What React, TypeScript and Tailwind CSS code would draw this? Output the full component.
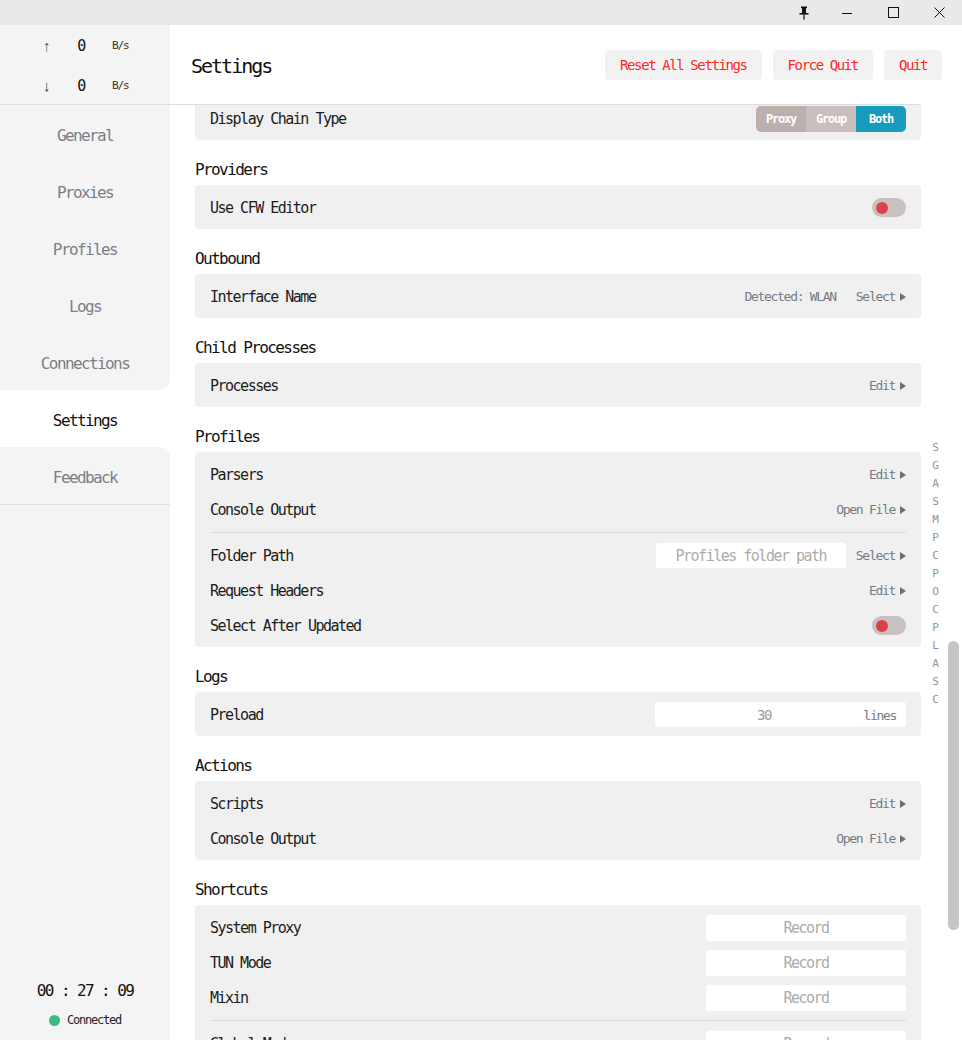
import React from 'react';

const navItems = ['General', 'Proxies', 'Profiles', 'Logs', 'Connections', 'Settings', 'Feedback'];
const indexLetters = ['S', 'G', 'A', 'S', 'M', 'P', 'C', 'P', 'O', 'C', 'P', 'L', 'A', 'S', 'C'];

function Arrow() {
  return (
    <svg width="6" height="8" viewBox="0 0 6 8" className="ml-[5px]">
      <polygon points="0,0 6,4 0,8" fill="#6f6f6f" />
    </svg>
  );
}

function Action({ text }: { text: string }) {
  return (
    <span className="flex items-center text-[13px] text-[#767b84]">
      {text}
      <Arrow />
    </span>
  );
}

function Toggle() {
  return (
    <div className="w-[34px] h-[19px] rounded-full bg-[#c9c0c0] flex items-center pl-[4px]">
      <span className="w-[12px] h-[12px] rounded-full bg-[#d8434a]" />
    </div>
  );
}

function RecordBox() {
  return (
    <div className="w-[200px] h-[26px] bg-white rounded-[3px] flex items-center justify-center pt-[2px] text-[15px] text-[#ababab]">
      Record
    </div>
  );
}

function Row({ label, children }: { label: string; children?: React.ReactNode }) {
  return (
    <div className="h-[35px] flex items-center justify-between px-[15px]">
      <span className="text-[15px] text-[#1c1c1c] pt-[2px]">{label}</span>
      <div className="flex items-center">{children}</div>
    </div>
  );
}

function Card({ children, className = '' }: { children: React.ReactNode; className?: string }) {
  return <div className={`w-[726px] bg-[#f0f0f0] rounded-[4px] pt-[5px] pb-[4px] ${className}`}>{children}</div>;
}

function Divider() {
  return <div className="mx-[15px] my-[5px] h-px bg-[#dadada]" />;
}

function Section({ title, children }: { title: string; children: React.ReactNode }) {
  return (
    <div className="mt-[17px]">
      <div className="h-6 leading-6 mb-1 pt-[1px] text-[16px] text-[#111]">{title}</div>
      {children}
    </div>
  );
}

function TitleBar() {
  return (
    <div className="h-[25px] bg-[#e9e9e9] flex justify-end items-center shrink-0">
      <div className="w-[40px] flex justify-center">
        <svg width="12" height="14" viewBox="0 0 12 14">
          <rect x="3" y="0.5" width="6" height="1.6" fill="#111" />
          <rect x="4" y="2" width="4" height="5" fill="#111" />
          <polygon points="1.5,7 10.5,7 10.5,8.6 1.5,8.6" fill="#111" />
          <rect x="5.4" y="8.6" width="1.2" height="5" fill="#111" />
        </svg>
      </div>
      <div className="w-[46px] flex justify-center">
        <svg width="10" height="10" viewBox="0 0 10 10">
          <line x1="0" y1="5.5" x2="10" y2="5.5" stroke="#111" strokeWidth="1" />
        </svg>
      </div>
      <div className="w-[46px] flex justify-center">
        <svg width="11" height="11" viewBox="0 0 11 11">
          <rect x="0.5" y="0.5" width="10" height="10" fill="none" stroke="#111" strokeWidth="1" />
        </svg>
      </div>
      <div className="w-[46px] flex justify-center">
        <svg width="11" height="11" viewBox="0 0 11 11">
          <path d="M0.5 0.5 L10.5 10.5 M10.5 0.5 L0.5 10.5" stroke="#111" strokeWidth="1" />
        </svg>
      </div>
    </div>
  );
}

function Sidebar() {
  const selected = 5;
  return (
    <div className="w-[170px] shrink-0 flex flex-col bg-white">
      {/* traffic */}
      <div className="h-[80px] bg-[#f4f4f4] border-b border-[#dedede] flex flex-col">
        {[
          { arrow: '↑', color: 'text-[#2a5c9b]' },
          { arrow: '↓', color: 'text-[#24406a]' },
        ].map((t, i) => (
          <div key={i} className={`${i === 0 ? 'h-[40px]' : 'h-[39px]'} flex items-center pl-[40px] pt-[3px]`}>
            <span className={`w-[12px] text-center text-[15px] font-['Liberation_Sans',sans-serif] ${t.color}`}>
              {t.arrow}
            </span>
            <span className="w-[58px] text-center text-[15px] text-[#111]">0</span>
            <span className="ml-[2px] text-[11px] text-[#3b3024]">B/s</span>
          </div>
        ))}
      </div>
      {/* nav */}
      <div className="flex flex-col">
        {navItems.map((item, i) => (
          <div
            key={item}
            className={`h-[57px] flex items-center justify-center pt-[5px] text-[16px] ${
              i === selected
                ? 'bg-white text-[#111]'
                : `bg-[#f4f4f4] text-[#7b7f88] ${i === selected - 1 ? 'rounded-br-[10px]' : ''} ${
                    i === selected + 1 ? 'rounded-tr-[10px] border-b border-[#dedede] h-[58px]' : ''
                  }`
            }`}
          >
            {item}
          </div>
        ))}
      </div>
      <div className="flex-1 bg-[#f4f4f4] flex flex-col justify-end items-center pb-[12px]">
        <div className="text-[16px] leading-[20px] text-[#111] mb-[11px]">00 : 27 : 09</div>
        <div className="flex items-center h-[16px]">
          <span className="w-[11px] h-[11px] rounded-full bg-[#3dba83] mr-[7px]" />
          <span className="text-[12px] text-[#1d2333]">Connected</span>
        </div>
      </div>
    </div>
  );
}

function Header() {
  return (
    <>
      <div className="h-[79px] flex items-center justify-between pl-[21px] pr-[20px] shrink-0">
        <span className="text-[20px] text-[#111] pt-[3px]">Settings</span>
        <div className="flex gap-[11px]">
          {['Reset All Settings', 'Force Quit', 'Quit'].map((b) => (
            <button
              key={b}
              className="h-[30px] px-[15px] pt-[2px] rounded-[4px] bg-[#f2f2f2] text-[14px] text-[#ff2626]"
            >
              {b}
            </button>
          ))}
        </div>
      </div>
      <div className="h-px w-[751px] bg-[#dedede] shrink-0" />
    </>
  );
}

function Content() {
  return (
    <div className="flex-1 flex overflow-hidden">
      <div className="w-[751px] pl-[25px] overflow-hidden">
        <Card className="mt-[-9px]">
          <Row label="Display Chain Type">
            <div className="flex h-[26px] rounded-[5px] overflow-hidden text-[12px] font-bold text-white">
              <span className="w-[50px] flex items-center justify-center bg-[#bcb0ae]">Proxy</span>
              <span className="w-[50px] flex items-center justify-center bg-[#c7bebd]">Group</span>
              <span className="w-[50px] flex items-center justify-center bg-[#189cbe]">Both</span>
            </div>
          </Row>
        </Card>

        <Section title="Providers">
          <Card>
            <Row label="Use CFW Editor">
              <Toggle />
            </Row>
          </Card>
        </Section>

        <Section title="Outbound">
          <Card>
            <Row label="Interface Name">
              <span className="text-[13px] text-[#767b84] mr-[20px]">Detected: WLAN</span>
              <Action text="Select" />
            </Row>
          </Card>
        </Section>

        <Section title="Child Processes">
          <Card>
            <Row label="Processes">
              <Action text="Edit" />
            </Row>
          </Card>
        </Section>

        <Section title="Profiles">
          <Card>
            <Row label="Parsers">
              <Action text="Edit" />
            </Row>
            <Row label="Console Output">
              <Action text="Open File" />
            </Row>
            <Divider />
            <Row label="Folder Path">
              <div className="w-[190px] h-[25px] bg-white rounded-[3px] flex items-center justify-center pt-[2px] text-[15px] text-[#acacac] mr-[10px]">
                Profiles folder path
              </div>
              <Action text="Select" />
            </Row>
            <Row label="Request Headers">
              <Action text="Edit" />
            </Row>
            <Row label="Select After Updated">
              <Toggle />
            </Row>
          </Card>
        </Section>

        <Section title="Logs">
          <Card>
            <Row label="Preload">
              <div className="w-[251px] h-[25px] bg-white rounded-[3px] flex items-center pr-[10px] pt-[2px]">
                <span className="shrink-0 w-[196px] ml-[11px] text-center text-[14px] text-[#9a9a9a]">30</span>
                <span className="ml-auto text-[13px] text-[#767b84]">lines</span>
              </div>
            </Row>
          </Card>
        </Section>

        <Section title="Actions">
          <Card>
            <Row label="Scripts">
              <Action text="Edit" />
            </Row>
            <Row label="Console Output">
              <Action text="Open File" />
            </Row>
          </Card>
        </Section>

        <Section title="Shortcuts">
          <Card>
            <Row label="System Proxy">
              <RecordBox />
            </Row>
            <Row label="TUN Mode">
              <RecordBox />
            </Row>
            <Row label="Mixin">
              <RecordBox />
            </Row>
            <Divider />
            <Row label="Global Mode">
              <RecordBox />
            </Row>
            <Row label="Rule Mode">
              <RecordBox />
            </Row>
          </Card>
        </Section>
      </div>

      {/* letter index + scrollbar */}
      <div className="w-[41px] flex">
        <div className="w-[27px] pt-[334px] flex flex-col items-end pr-[9px]">
          {indexLetters.map((l, i) => (
            <span key={i} className="h-[18px] leading-[18px] w-[8px] text-center text-[11px] text-[#8e93a3]">
              {l}
            </span>
          ))}
        </div>
        <div className="pt-[536px]">
          <div className="w-[11px] h-[289px] rounded-full bg-[#c5c5c5]" />
        </div>
      </div>
    </div>
  );
}

export default function App() {
  return (
    <div className="w-[962px] h-[1040px] overflow-hidden flex flex-col bg-white font-['DejaVu_Sans_Mono',monospace] [&_*]:tracking-[-0.1em]">
      <TitleBar />
      <div className="flex flex-1 min-h-0">
        <Sidebar />
        <div className="flex-1 flex flex-col min-w-0">
          <Header />
          <Content />
        </div>
      </div>
    </div>
  );
}
